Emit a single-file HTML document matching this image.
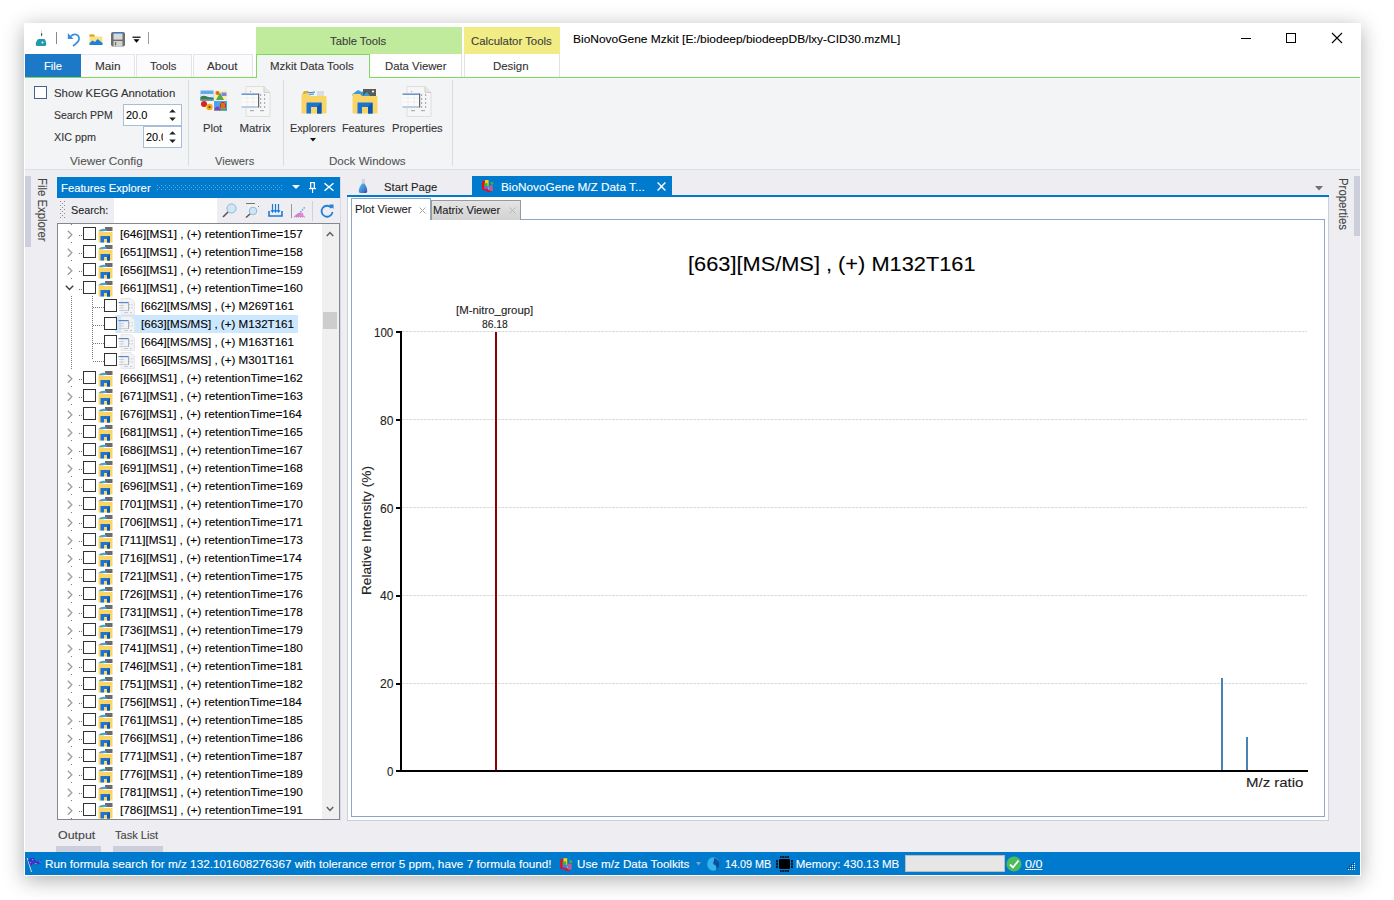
<!DOCTYPE html>
<html><head><meta charset="utf-8">
<style>
*{box-sizing:border-box;margin:0;padding:0}
html,body{width:1394px;height:900px;overflow:hidden;background:#fff;font-family:"Liberation Sans",sans-serif;font-size:12px;color:#1e1e1e}
.a{position:absolute}
svg.a{overflow:visible}
.t{position:absolute;white-space:nowrap;line-height:1;transform-origin:0 0;-webkit-text-stroke:0.1px currentColor}
</style></head><body>
<div class="a" style="left:24px;top:23px;width:1337px;height:853px;background:#fff;box-shadow:0 4px 20px rgba(0,0,0,0.32)"></div>
<div class="a" style="left:25px;top:23px;width:1335px;height:31px;background:#fff"></div>
<svg class="a" style="left:35px;top:29px;" width="12" height="18" viewBox="0 0 12 18"><line x1="6.5" y1="1" x2="6.5" y2="8" stroke="#d0d0d0" stroke-width="0.8"/><rect x="6" y="4.5" width="1.2" height="2" fill="#333"/><path d="M3.5 10 H9.5 Q11.5 12 11.3 15.5 Q11 17 9.5 17 H2.5 Q1 17 0.8 15.5 Q0.6 12 3.5 10Z" fill="#1f9bab"/><circle cx="7.5" cy="13.5" r="1" fill="#fff"/></svg>
<div class="a" style="left:56px;top:32px;width:1px;height:12px;background:#8a8a8a"></div>
<svg class="a" style="left:67px;top:32px;" width="14" height="15" viewBox="0 0 14 15"><path d="M3.5 4.5 Q6 2 9 2.5 Q12.5 3.5 12 7.5 Q11.5 10 6 14" fill="none" stroke="#3b8de0" stroke-width="1.7"/><path d="M0.8 1 L0.8 7 L6.5 7 Z" fill="#3b8de0"/></svg>
<svg class="a" style="left:89px;top:34px;" width="14" height="12" viewBox="0 0 14 12"><path d="M0.5 0.5 H5 L6 2.5 H13.5 V11 H0.5 Z" fill="#fbe08a"/><path d="M0.5 0.5 H5 L6 2.5 H0.5Z" fill="#dba21e"/><path d="M0.5 11 V9 L3.5 6.5 L6 8 L8.5 5 L13.5 9 V11Z" fill="#1f80d8"/></svg>
<svg class="a" style="left:110px;top:31px;" width="16" height="16" viewBox="0 0 16 16"><rect x="1" y="1" width="14" height="14.5" rx="2" fill="#6e6e6e"/><rect x="3.5" y="1" width="9" height="1.6" fill="#2e7fd0"/><rect x="3.5" y="2.6" width="9" height="6" fill="#d9d9d9"/><rect x="3.5" y="10" width="9" height="5.5" fill="#d2d2d2"/><rect x="5" y="11" width="1.2" height="3.5" fill="#6e6e6e"/></svg>
<svg class="a" style="left:132px;top:36px;" width="9" height="8" viewBox="0 0 9 8"><rect x="0.5" y="0.6" width="8" height="1.2" fill="#000"/><path d="M1.5 3.2 H7.5 L4.5 6.8 Z" fill="#000"/></svg>
<div class="a" style="left:148px;top:32px;width:1px;height:12px;background:#9a9a9a"></div>
<div class="a" style="left:256px;top:27px;width:206px;height:27px;background:#c0eb9c"></div>
<div class="a" style="left:464px;top:27px;width:96px;height:27px;background:#f1ec84"></div>
<div class="t" style="left:330.00px;top:36px;color:#3c3c3c;font-size:11.5px;transform:scaleX(0.9795);">Table Tools</div>
<div class="t" style="left:471.40px;top:36px;color:#3c3c3c;font-size:11.5px;transform:scaleX(0.9895);">Calculator Tools</div>
<div class="t" style="left:573.40px;top:34px;color:#000;font-size:11.5px;transform:scaleX(1.0405);">BioNovoGene Mzkit [E:/biodeep/biodeepDB/lxy-CID30.mzML]</div>
<div class="a" style="left:1241px;top:38px;width:10px;height:1px;background:#000"></div>
<div class="a" style="left:1286px;top:33px;width:10px;height:10px;border:1px solid #000"></div>
<svg class="a" style="left:1332px;top:33px;" width="10" height="10" viewBox="0 0 10 10"><path d="M0 0L10 10M10 0L0 10" stroke="#000" stroke-width="1.1"/></svg>
<div class="a" style="left:25px;top:54px;width:56px;height:23px;background:#1c79c8"></div>
<div class="t" style="left:44.40px;top:61px;color:#fff;font-size:11.5px;transform:scaleX(0.9705);">File</div>
<div class="a" style="left:81px;top:54px;width:54px;height:23px;background:#fbfbfd;border:1px solid #e4e5e6;border-bottom:none;border-left:none"></div>
<div class="a" style="left:136px;top:54px;width:56px;height:23px;background:#fbfbfd;border:1px solid #e4e5e6;border-bottom:none"></div>
<div class="a" style="left:193px;top:54px;width:60px;height:23px;background:#fbfbfd;border:1px solid #e4e5e6;border-bottom:none"></div>
<div class="t" style="left:95.40px;top:61px;color:#333;font-size:11.5px;transform:scaleX(1.0232);">Main</div>
<div class="t" style="left:149.90px;top:61px;color:#333;font-size:11.5px;transform:scaleX(0.9817);">Tools</div>
<div class="t" style="left:207.10px;top:61px;color:#333;font-size:11.5px;transform:scaleX(1.0176);">About</div>
<div class="a" style="left:25px;top:77px;width:1335px;height:1px;background:#7fd95a"></div>
<div class="a" style="left:256px;top:54px;width:114px;height:24px;background:#f3f4f6;border:1px solid #7fd95a;border-bottom:none"></div>
<div class="t" style="left:270.40px;top:61px;color:#333;font-size:11.5px;transform:scaleX(0.9952);">Mzkit Data Tools</div>
<div class="a" style="left:370px;top:54px;width:92px;height:23px;background:#fff;border-right:1px solid #e0e1e2"></div>
<div class="t" style="left:385.40px;top:61px;color:#333;font-size:11.5px;transform:scaleX(0.9840);">Data Viewer</div>
<div class="a" style="left:464px;top:54px;width:96px;height:23px;background:#fff;border-left:1px solid #e0e1e2;border-right:1px solid #e0e1e2"></div>
<div class="t" style="left:493.40px;top:61px;color:#333;font-size:11.5px;transform:scaleX(0.9943);">Design</div>
<div class="a" style="left:25px;top:78px;width:1335px;height:92px;background:#f3f4f6;border-bottom:1px solid #dddee0"></div>
<div class="a" style="left:34px;top:86px;width:13px;height:13px;background:#fff;border:1px solid #49618f"></div>
<div class="t" style="left:54.30px;top:88px;color:#333;font-size:11.5px;transform:scaleX(0.9879);">Show KEGG Annotation</div>
<div class="t" style="left:54.30px;top:110px;color:#333;font-size:11.5px;transform:scaleX(0.9098);">Search PPM</div>
<div class="t" style="left:54.30px;top:132px;color:#333;font-size:11.5px;transform:scaleX(0.9376);">XIC ppm</div>
<div class="a" style="left:123px;top:104px;width:59px;height:22px;background:#fff;border:1px solid #a9bcd8"></div>
<div class="t" style="left:126.00px;top:110px;color:#000;font-size:11.5px;transform:scaleX(0.9551);">20.0</div>
<div class="a" style="left:143px;top:126px;width:39px;height:22px;background:#fff;border:1px solid #a9bcd8"></div>
<div class="a" style="left:146px;top:126px;width:17px;height:20px;overflow:hidden">
<div class="t" style="left:0.20px;top:6px;color:#000;font-size:11.5px;transform:scaleX(0.9460);">20.0</div>
</div>
<svg class="a" style="left:169px;top:109px;" width="7" height="12" viewBox="0 0 7 12"><path d="M0.2 3.6 L3.5 0.2 L6.8 3.6 Z" fill="#222"/><path d="M0.2 8.5 L3.5 11.9 L6.8 8.5 Z" fill="#222"/></svg>
<svg class="a" style="left:169px;top:131px;" width="7" height="12" viewBox="0 0 7 12"><path d="M0.2 3.6 L3.5 0.2 L6.8 3.6 Z" fill="#222"/><path d="M0.2 8.5 L3.5 11.9 L6.8 8.5 Z" fill="#222"/></svg>
<div class="t" style="left:70.40px;top:156px;color:#555;font-size:11.5px;transform:scaleX(1.0185);">Viewer Config</div>
<div class="a" style="left:188px;top:80px;width:1px;height:86px;background:#dcdde0"></div>
<div class="a" style="left:283px;top:80px;width:1px;height:86px;background:#dcdde0"></div>
<div class="a" style="left:452px;top:80px;width:1px;height:86px;background:#dcdde0"></div>
<div class="t" style="left:215.00px;top:156px;color:#555;font-size:11.5px;transform:scaleX(0.9647);">Viewers</div>
<div class="t" style="left:328.50px;top:156px;color:#555;font-size:11.5px;transform:scaleX(1.0079);">Dock Windows</div>
<div class="t" style="left:203.00px;top:123px;color:#333;font-size:11.5px;transform:scaleX(0.9699);">Plot</div>
<div class="t" style="left:239.40px;top:123px;color:#333;font-size:11.5px;">Matrix</div>
<div class="t" style="left:290.30px;top:123px;color:#333;font-size:11.5px;transform:scaleX(0.9402);">Explorers</div>
<div class="t" style="left:342.40px;top:123px;color:#333;font-size:11.5px;transform:scaleX(0.9379);">Features</div>
<div class="t" style="left:391.50px;top:123px;color:#333;font-size:11.5px;transform:scaleX(0.9665);">Properties</div>
<svg class="a" style="left:310px;top:138px;" width="7" height="4" viewBox="0 0 7 4"><path d="M0 0 H6 L3 3.5 Z" fill="#111"/></svg>
<div class="a" style="left:25px;top:170px;width:1335px;height:682px;background:#eeeef2"></div>
<svg class="a" style="left:200px;top:90px;" width="28" height="21" viewBox="0 0 28 21">
<rect x="0.5" y="0.5" width="13" height="10" fill="#6aa7e8"/>
<rect x="0.5" y="4" width="13" height="3" fill="#dfeefa"/>
<path d="M0.5 7 Q4 4.5 9 7.5 L13.5 8 V10.5 H0.5Z" fill="#3d7d3b"/>
<rect x="0.5" y="9" width="13" height="1.5" fill="#5c8fc4"/>
<rect x="14" y="0.5" width="13" height="10" fill="#f3f0b0"/>
<path d="M16 10 L20 2.5 L24 10Z" fill="#5aa54a"/>
<circle cx="17.5" cy="3" r="2" fill="#e8641e"/>
<rect x="21.5" y="2.5" width="5" height="3.5" fill="#7a86e0"/>
<rect x="0.5" y="11" width="13" height="9.5" fill="#f7f3ea"/>
<circle cx="4" cy="14" r="3" fill="#d8231c"/>
<circle cx="9.5" cy="17" r="3.2" fill="#f2a81c"/>
<circle cx="9.5" cy="17" r="1" fill="#5a3a10"/>
<rect x="14" y="11" width="13" height="9.5" fill="#4aa3ee"/>
<path d="M14 20.5 Q16 15 19 17 Q21 19 20 20.5Z" fill="#8f3fa8"/>
<ellipse cx="23" cy="15.5" rx="3" ry="3.6" fill="#c8221e"/>
<path d="M22 13 V19 M24 13 V19" stroke="#f5d21a" stroke-width="0.9"/>
<rect x="19" y="19.5" width="8" height="1" fill="#2b9a3a"/>
</svg>
<svg class="a" style="left:241px;top:86px;" width="30" height="31" viewBox="0 0 30 31">
<path d="M5 0.5 H23 L29 6.5 V30.5 H5Z" fill="#f6f6f6" stroke="#dedede"/>
<path d="M23 0.5 V6.5 H29" fill="#e6e6e6" stroke="#cfcfcf"/>
<g fill="#a8aebb"><rect x="19" y="8" width="1.2" height="2"/><rect x="23" y="8" width="1.2" height="2"/><rect x="19" y="12" width="1.2" height="2"/><rect x="23" y="12" width="1.2" height="2"/><rect x="19" y="16" width="1.2" height="2"/><rect x="23" y="16" width="1.2" height="2"/><rect x="19" y="20" width="1.2" height="2"/><rect x="23" y="20" width="1.2" height="2"/><rect x="9" y="24" width="4" height="1.2"/><rect x="19" y="24" width="4" height="1.2"/><rect x="9" y="5" width="1.2" height="1.2"/></g>
<rect x="0.5" y="7.5" width="17" height="14" fill="#fbfbfb"/>
<rect x="0.5" y="7.5" width="17" height="1.3" fill="#4f7fc0"/>
<rect x="0.5" y="20.5" width="17" height="1" fill="#7f9fcf"/>
<rect x="17" y="7.5" width="1.2" height="14" fill="#666"/>
<g stroke="#e8e8e8" stroke-width="0.6"><line x1="1" y1="12" x2="17" y2="12"/><line x1="1" y1="16" x2="17" y2="16"/><line x1="6" y1="9" x2="6" y2="20"/><line x1="12" y1="9" x2="12" y2="20"/></g>
</svg>
<svg class="a" style="left:402px;top:86px;" width="30" height="31" viewBox="0 0 30 31">
<path d="M5 0.5 H23 L29 6.5 V30.5 H5Z" fill="#f6f6f6" stroke="#dedede"/>
<path d="M23 0.5 V6.5 H29" fill="#e6e6e6" stroke="#cfcfcf"/>
<g fill="#a8aebb"><rect x="19" y="8" width="1.2" height="2"/><rect x="23" y="8" width="1.2" height="2"/><rect x="19" y="12" width="1.2" height="2"/><rect x="23" y="12" width="1.2" height="2"/><rect x="19" y="16" width="1.2" height="2"/><rect x="23" y="16" width="1.2" height="2"/><rect x="19" y="20" width="1.2" height="2"/><rect x="23" y="20" width="1.2" height="2"/><rect x="9" y="24" width="4" height="1.2"/><rect x="19" y="24" width="4" height="1.2"/><rect x="9" y="5" width="1.2" height="1.2"/></g>
<rect x="0.5" y="7.5" width="17" height="14" fill="#fbfbfb"/>
<rect x="0.5" y="7.5" width="17" height="1.3" fill="#4f7fc0"/>
<rect x="0.5" y="20.5" width="17" height="1" fill="#7f9fcf"/>
<rect x="17" y="7.5" width="1.2" height="14" fill="#666"/>
<g stroke="#e8e8e8" stroke-width="0.6"><line x1="1" y1="12" x2="17" y2="12"/><line x1="1" y1="16" x2="17" y2="16"/><line x1="6" y1="9" x2="6" y2="20"/><line x1="12" y1="9" x2="12" y2="20"/></g>
</svg>
<svg class="a" style="left:301px;top:89px;" width="26" height="25" viewBox="0 0 26 25"><path d="M1 6 L3 2 H9 L10 3 Z" fill="#e0a92c"/><path d="M4 6 L9 1 L17 2 L15 7Z" fill="#f4f4f4"/><path d="M6 4 L14 3 M7 5.5 L13 5" stroke="#2a7fd0" stroke-width="1"/><rect x="16" y="2" width="7" height="5" fill="#d8dde3"/>
<path d="M0.5 6 Q0.5 5 1.5 5 H8 L10 7 H24.5 Q25.5 7 25.5 8 V23.5 Q25.5 24.5 24.5 24.5 H1.5 Q0.5 24.5 0.5 23.5Z" fill="#f9d466"/>
<path d="M5.5 24.5 V14 Q5.5 13.5 6 13.5 H20 Q20.5 13.5 20.5 14 V24.5 H16 V18 H10 V24.5Z" fill="#1b73d1"/>
<path d="M16 18 L20.5 13.5 V24.5 H16Z" fill="#0b58b0"/>
</svg>
<svg class="a" style="left:352px;top:89px;" width="26" height="25" viewBox="0 0 26 25"><path d="M0.5 5 L6 1 L10 3 L13 1 V7 H0.5Z" fill="#3a9bd8"/><rect x="11" y="0" width="13" height="7" fill="#5b5b5b"/><circle cx="21" cy="2.5" r="1.1" fill="#fff"/><path d="M11 7 L15 3 L18 7Z" fill="#3a9bd8"/>
<path d="M0.5 6 Q0.5 5 1.5 5 H8 L10 7 H24.5 Q25.5 7 25.5 8 V23.5 Q25.5 24.5 24.5 24.5 H1.5 Q0.5 24.5 0.5 23.5Z" fill="#f9d466"/>
<path d="M5.5 24.5 V14 Q5.5 13.5 6 13.5 H20 Q20.5 13.5 20.5 14 V24.5 H16 V18 H10 V24.5Z" fill="#1b73d1"/>
<path d="M16 18 L20.5 13.5 V24.5 H16Z" fill="#0b58b0"/>
</svg>
<div class="a" style="left:25px;top:176px;width:6px;height:71px;background:#cccedb"></div>
<div class="t" style="left:36px;top:178px;color:#444;font-size:12px;transform-origin:0 0;transform:translate(12px,0) rotate(90deg) scaleX(0.945)">File Explorer</div>
<div class="a" style="left:1354px;top:176px;width:6px;height:60px;background:#cccedb"></div>
<div class="t" style="left:1337px;top:178px;color:#444;font-size:12px;transform-origin:0 0;transform:translate(12px,0) rotate(90deg) scaleX(0.95)">Properties</div>
<div class="a" style="left:57px;top:177px;width:283px;height:21px;background:#007acc"></div>
<div class="t" style="left:61.30px;top:183px;color:#fff;font-size:11.5px;transform:scaleX(0.9807);">Features Explorer</div>
<svg class="a" style="left:157px;top:185px;" width="126" height="5" viewBox="0 0 126 5"><g fill="#6aaee0"><rect x="0" y="0" width="1" height="1"/><rect x="0" y="4" width="1" height="1"/><rect x="2" y="2" width="1" height="1"/><rect x="4" y="0" width="1" height="1"/><rect x="4" y="4" width="1" height="1"/><rect x="6" y="2" width="1" height="1"/><rect x="8" y="0" width="1" height="1"/><rect x="8" y="4" width="1" height="1"/><rect x="10" y="2" width="1" height="1"/><rect x="12" y="0" width="1" height="1"/><rect x="12" y="4" width="1" height="1"/><rect x="14" y="2" width="1" height="1"/><rect x="16" y="0" width="1" height="1"/><rect x="16" y="4" width="1" height="1"/><rect x="18" y="2" width="1" height="1"/><rect x="20" y="0" width="1" height="1"/><rect x="20" y="4" width="1" height="1"/><rect x="22" y="2" width="1" height="1"/><rect x="24" y="0" width="1" height="1"/><rect x="24" y="4" width="1" height="1"/><rect x="26" y="2" width="1" height="1"/><rect x="28" y="0" width="1" height="1"/><rect x="28" y="4" width="1" height="1"/><rect x="30" y="2" width="1" height="1"/><rect x="32" y="0" width="1" height="1"/><rect x="32" y="4" width="1" height="1"/><rect x="34" y="2" width="1" height="1"/><rect x="36" y="0" width="1" height="1"/><rect x="36" y="4" width="1" height="1"/><rect x="38" y="2" width="1" height="1"/><rect x="40" y="0" width="1" height="1"/><rect x="40" y="4" width="1" height="1"/><rect x="42" y="2" width="1" height="1"/><rect x="44" y="0" width="1" height="1"/><rect x="44" y="4" width="1" height="1"/><rect x="46" y="2" width="1" height="1"/><rect x="48" y="0" width="1" height="1"/><rect x="48" y="4" width="1" height="1"/><rect x="50" y="2" width="1" height="1"/><rect x="52" y="0" width="1" height="1"/><rect x="52" y="4" width="1" height="1"/><rect x="54" y="2" width="1" height="1"/><rect x="56" y="0" width="1" height="1"/><rect x="56" y="4" width="1" height="1"/><rect x="58" y="2" width="1" height="1"/><rect x="60" y="0" width="1" height="1"/><rect x="60" y="4" width="1" height="1"/><rect x="62" y="2" width="1" height="1"/><rect x="64" y="0" width="1" height="1"/><rect x="64" y="4" width="1" height="1"/><rect x="66" y="2" width="1" height="1"/><rect x="68" y="0" width="1" height="1"/><rect x="68" y="4" width="1" height="1"/><rect x="70" y="2" width="1" height="1"/><rect x="72" y="0" width="1" height="1"/><rect x="72" y="4" width="1" height="1"/><rect x="74" y="2" width="1" height="1"/><rect x="76" y="0" width="1" height="1"/><rect x="76" y="4" width="1" height="1"/><rect x="78" y="2" width="1" height="1"/><rect x="80" y="0" width="1" height="1"/><rect x="80" y="4" width="1" height="1"/><rect x="82" y="2" width="1" height="1"/><rect x="84" y="0" width="1" height="1"/><rect x="84" y="4" width="1" height="1"/><rect x="86" y="2" width="1" height="1"/><rect x="88" y="0" width="1" height="1"/><rect x="88" y="4" width="1" height="1"/><rect x="90" y="2" width="1" height="1"/><rect x="92" y="0" width="1" height="1"/><rect x="92" y="4" width="1" height="1"/><rect x="94" y="2" width="1" height="1"/><rect x="96" y="0" width="1" height="1"/><rect x="96" y="4" width="1" height="1"/><rect x="98" y="2" width="1" height="1"/><rect x="100" y="0" width="1" height="1"/><rect x="100" y="4" width="1" height="1"/><rect x="102" y="2" width="1" height="1"/><rect x="104" y="0" width="1" height="1"/><rect x="104" y="4" width="1" height="1"/><rect x="106" y="2" width="1" height="1"/><rect x="108" y="0" width="1" height="1"/><rect x="108" y="4" width="1" height="1"/><rect x="110" y="2" width="1" height="1"/><rect x="112" y="0" width="1" height="1"/><rect x="112" y="4" width="1" height="1"/><rect x="114" y="2" width="1" height="1"/><rect x="116" y="0" width="1" height="1"/><rect x="116" y="4" width="1" height="1"/><rect x="118" y="2" width="1" height="1"/><rect x="120" y="0" width="1" height="1"/><rect x="120" y="4" width="1" height="1"/><rect x="122" y="2" width="1" height="1"/><rect x="124" y="0" width="1" height="1"/><rect x="124" y="4" width="1" height="1"/></g></svg>
<svg class="a" style="left:292px;top:185px;" width="8" height="4" viewBox="0 0 8 4"><path d="M0 0 H8 L4 4Z" fill="#fff"/></svg>
<svg class="a" style="left:309px;top:182px;" width="7" height="11" viewBox="0 0 7 11"><path d="M1 0 H6 V6 H1Z" fill="#fff"/><rect x="2.3" y="1.2" width="2.4" height="4.6" fill="#007acc"/><rect x="0" y="6" width="7" height="1.2" fill="#fff"/><rect x="3" y="7" width="1.1" height="4" fill="#fff"/></svg>
<svg class="a" style="left:324px;top:183px;" width="10" height="8" viewBox="0 0 10 8"><path d="M0.5 0.2L9.5 7.8M9.5 0.2L0.5 7.8" stroke="#fff" stroke-width="1.5"/></svg>
<div class="a" style="left:57px;top:198px;width:283px;height:25px;background:#eeeef2"></div>
<svg class="a" style="left:60px;top:201px;" width="5" height="17" viewBox="0 0 5 17"><g fill="#8a8a92"><rect x="0" y="0" width="1" height="1"/><rect x="4" y="0" width="1" height="1"/><rect x="2" y="2" width="1" height="1"/><rect x="0" y="4" width="1" height="1"/><rect x="4" y="4" width="1" height="1"/><rect x="2" y="6" width="1" height="1"/><rect x="0" y="8" width="1" height="1"/><rect x="4" y="8" width="1" height="1"/><rect x="2" y="10" width="1" height="1"/><rect x="0" y="12" width="1" height="1"/><rect x="4" y="12" width="1" height="1"/><rect x="2" y="14" width="1" height="1"/><rect x="0" y="16" width="1" height="1"/><rect x="4" y="16" width="1" height="1"/></g></svg>
<div class="t" style="left:71.40px;top:205px;color:#1e1e1e;font-size:11.5px;transform:scaleX(0.9382);">Search:</div>
<div class="a" style="left:114px;top:198px;width:103px;height:25px;background:#fff"></div>
<svg class="a" style="left:222px;top:203px;" width="15" height="15" viewBox="0 0 15 15"><circle cx="9.5" cy="5.5" r="4.6" fill="#cfe6f7" stroke="#8fb7d8" stroke-width="1"/><line x1="6" y1="9" x2="1" y2="14" stroke="#555" stroke-width="1.6"/></svg>
<svg class="a" style="left:245px;top:203px;" width="14" height="15" viewBox="0 0 14 15"><rect x="1" y="0" width="9" height="1" fill="#777"/><rect x="10" y="3" width="4" height="1" fill="#777"/><rect x="3" y="2" width="10" height="11" fill="#f2f2f4"/><circle cx="8" cy="8" r="3.8" fill="#cfe6f7" stroke="#8fb7d8" stroke-width="1"/><line x1="5" y1="11" x2="1" y2="14.5" stroke="#555" stroke-width="1.5"/></svg>
<svg class="a" style="left:268px;top:203px;" width="15" height="15" viewBox="0 0 15 15"><path d="M1 8 V13 H14 V8" fill="none" stroke="#1a7bd4" stroke-width="1.6"/><path d="M4.5 1 V9 M7.5 1 V9 M10.5 1 V9" stroke="#1a7bd4" stroke-width="1.2"/><path d="M3 7 L4.5 9.5 L6 7 M6 7 L7.5 9.5 L9 7 M9 7 L10.5 9.5 L12 7" fill="none" stroke="#1a7bd4" stroke-width="1"/></svg>
<div class="a" style="left:291px;top:204px;width:1px;height:14px;background:#999"></div>
<svg class="a" style="left:293px;top:204px;" width="13" height="14" viewBox="0 0 13 14"><path d="M1 13 Q4 8 10 9 L11 13Z" fill="#f080d8"/><path d="M4 12 L12 3" stroke="#5aa0e0" stroke-width="1.4" stroke-dasharray="1.5 1"/><path d="M1 13 H12" stroke="#888" stroke-width="0.8" stroke-dasharray="1 1"/></svg>
<div class="a" style="left:312px;top:201px;width:1px;height:20px;background:#d2d2d8"></div>
<svg class="a" style="left:320px;top:204px;" width="14" height="14" viewBox="0 0 14 14"><path d="M11.5 4 A5.5 5.5 0 1 0 12.5 8" fill="none" stroke="#1f7fd6" stroke-width="1.8"/><path d="M9 0.5 L13.5 0.5 L13.5 5Z" fill="#1f7fd6"/></svg>
<div class="a" style="left:57px;top:223px;width:283px;height:597px;background:#fff;border:1px solid #828790"></div>
<div class="a" style="left:322px;top:224px;width:17px;height:595px;background:#f0f0f0"></div>
<svg class="a" style="left:326px;top:231px;" width="8" height="6" viewBox="0 0 8 6"><path d="M0.8 5 L4 1.5 L7.2 5" fill="none" stroke="#606060" stroke-width="1.5"/></svg>
<svg class="a" style="left:326px;top:806px;" width="8" height="6" viewBox="0 0 8 6"><path d="M0.8 1 L4 4.5 L7.2 1" fill="none" stroke="#606060" stroke-width="1.5"/></svg>
<div class="a" style="left:323px;top:312px;width:14px;height:17px;background:#cdcdcd"></div>
<div class="a" style="left:71px;top:224px;width:1px;height:595px;background-image:linear-gradient(#777 50%, transparent 50%);background-size:1px 2px"></div>
<div class="a" style="left:79px;top:235px;width:4px;height:1px;background-image:linear-gradient(90deg,#777 50%, transparent 50%);background-size:2px 1px"></div>
<div class="a" style="left:83px;top:227px;width:13px;height:13px;background:#fff;border:1px solid #333"></div>
<svg class="a" style="left:98px;top:227px;" width="15" height="16" viewBox="0 0 15 16">
<path d="M0.5 4 H5 L6 5 H14.5 V15.5 H0.5Z" fill="#fbd565"/>
<path d="M2.5 15.5 V9 H12 V15.5 H9 V12 H6 V15.5Z" fill="#1d74d2"/>
<path d="M9 12 L12 9 V15.5 H9Z" fill="#0d5cb5"/>
<rect x="7" y="0" width="7.5" height="4" fill="#6b6b6b"/>
<path d="M0.5 4 Q3 1 8 2 L9 4Z" fill="#45a2de"/>
</svg>
<div class="t" style="left:119.80px;top:229px;color:#000;font-size:11.5px;transform:scaleX(1.0238);">[646][MS1] , (+) retentionTime=157</div>
<div class="a" style="left:63px;top:226px;width:14px;height:16px;background:#fff"></div>
<svg class="a" style="left:67px;top:230px;" width="6" height="10" viewBox="0 0 6 10"><path d="M0.8 0.8 L4.8 4.8 L0.8 8.8" fill="none" stroke="#a0a0a0" stroke-width="1.4"/></svg>
<div class="a" style="left:79px;top:253px;width:4px;height:1px;background-image:linear-gradient(90deg,#777 50%, transparent 50%);background-size:2px 1px"></div>
<div class="a" style="left:83px;top:245px;width:13px;height:13px;background:#fff;border:1px solid #333"></div>
<svg class="a" style="left:98px;top:245px;" width="15" height="16" viewBox="0 0 15 16">
<path d="M0.5 4 H5 L6 5 H14.5 V15.5 H0.5Z" fill="#fbd565"/>
<path d="M2.5 15.5 V9 H12 V15.5 H9 V12 H6 V15.5Z" fill="#1d74d2"/>
<path d="M9 12 L12 9 V15.5 H9Z" fill="#0d5cb5"/>
<rect x="7" y="0" width="7.5" height="4" fill="#6b6b6b"/>
<path d="M0.5 4 Q3 1 8 2 L9 4Z" fill="#45a2de"/>
</svg>
<div class="t" style="left:119.80px;top:247px;color:#000;font-size:11.5px;transform:scaleX(1.0238);">[651][MS1] , (+) retentionTime=158</div>
<div class="a" style="left:63px;top:244px;width:14px;height:16px;background:#fff"></div>
<svg class="a" style="left:67px;top:248px;" width="6" height="10" viewBox="0 0 6 10"><path d="M0.8 0.8 L4.8 4.8 L0.8 8.8" fill="none" stroke="#a0a0a0" stroke-width="1.4"/></svg>
<div class="a" style="left:79px;top:271px;width:4px;height:1px;background-image:linear-gradient(90deg,#777 50%, transparent 50%);background-size:2px 1px"></div>
<div class="a" style="left:83px;top:263px;width:13px;height:13px;background:#fff;border:1px solid #333"></div>
<svg class="a" style="left:98px;top:263px;" width="15" height="16" viewBox="0 0 15 16">
<path d="M0.5 4 H5 L6 5 H14.5 V15.5 H0.5Z" fill="#fbd565"/>
<path d="M2.5 15.5 V9 H12 V15.5 H9 V12 H6 V15.5Z" fill="#1d74d2"/>
<path d="M9 12 L12 9 V15.5 H9Z" fill="#0d5cb5"/>
<rect x="7" y="0" width="7.5" height="4" fill="#6b6b6b"/>
<path d="M0.5 4 Q3 1 8 2 L9 4Z" fill="#45a2de"/>
</svg>
<div class="t" style="left:119.80px;top:265px;color:#000;font-size:11.5px;transform:scaleX(1.0238);">[656][MS1] , (+) retentionTime=159</div>
<div class="a" style="left:63px;top:262px;width:14px;height:16px;background:#fff"></div>
<svg class="a" style="left:67px;top:266px;" width="6" height="10" viewBox="0 0 6 10"><path d="M0.8 0.8 L4.8 4.8 L0.8 8.8" fill="none" stroke="#a0a0a0" stroke-width="1.4"/></svg>
<div class="a" style="left:79px;top:289px;width:4px;height:1px;background-image:linear-gradient(90deg,#777 50%, transparent 50%);background-size:2px 1px"></div>
<div class="a" style="left:83px;top:281px;width:13px;height:13px;background:#fff;border:1px solid #333"></div>
<svg class="a" style="left:98px;top:281px;" width="15" height="16" viewBox="0 0 15 16">
<path d="M0.5 4 H5 L6 5 H14.5 V15.5 H0.5Z" fill="#fbd565"/>
<path d="M2.5 15.5 V9 H12 V15.5 H9 V12 H6 V15.5Z" fill="#1d74d2"/>
<path d="M9 12 L12 9 V15.5 H9Z" fill="#0d5cb5"/>
<rect x="7" y="0" width="7.5" height="4" fill="#6b6b6b"/>
<path d="M0.5 4 Q3 1 8 2 L9 4Z" fill="#45a2de"/>
</svg>
<div class="t" style="left:119.80px;top:283px;color:#000;font-size:11.5px;transform:scaleX(1.0238);">[661][MS1] , (+) retentionTime=160</div>
<div class="a" style="left:63px;top:280px;width:14px;height:16px;background:#fff"></div>
<svg class="a" style="left:65px;top:285px;" width="9" height="6" viewBox="0 0 9 6"><path d="M0.8 0.8 L4.5 4.5 L8.2 0.8" fill="none" stroke="#404040" stroke-width="1.5"/></svg>
<div class="a" style="left:93px;top:307px;width:11px;height:1px;background-image:linear-gradient(90deg,#777 50%, transparent 50%);background-size:2px 1px"></div>
<div class="a" style="left:104px;top:299px;width:13px;height:13px;background:#fff;border:1px solid #333"></div>
<svg class="a" style="left:118px;top:298px;" width="17" height="17" viewBox="0 0 17 17">
<path d="M3 0.5 H13 L16.5 4 V16.5 H3Z" fill="#f3f3f5" stroke="#e2e2e6" stroke-width="0.8"/>
<rect x="0.5" y="4" width="10" height="1.2" fill="#5a86c8"/>
<g fill="#c4cad6"><rect x="1" y="7" width="5" height="0.9"/><rect x="1" y="9.5" width="5" height="0.9"/><rect x="1" y="12" width="9" height="0.9"/><rect x="11" y="6" width="1" height="1.5"/><rect x="13.5" y="6" width="1" height="1.5"/><rect x="11" y="9" width="1" height="1.5"/><rect x="13.5" y="9" width="1" height="1.5"/><rect x="6" y="14" width="4" height="1"/><rect x="12" y="14" width="2" height="1"/></g>
<rect x="10" y="4" width="0.8" height="9" fill="#9aa0aa"/>
</svg>
<div class="t" style="left:141.20px;top:301px;color:#000;font-size:11.5px;transform:scaleX(1.0079);">[662][MS/MS] , (+) M269T161</div>
<div class="a" style="left:115px;top:315px;width:183px;height:18px;background:#cce8ff"></div>
<div class="a" style="left:93px;top:325px;width:11px;height:1px;background-image:linear-gradient(90deg,#777 50%, transparent 50%);background-size:2px 1px"></div>
<div class="a" style="left:104px;top:317px;width:13px;height:13px;background:#fff;border:1px solid #333"></div>
<svg class="a" style="left:118px;top:316px;" width="17" height="17" viewBox="0 0 17 17">
<path d="M3 0.5 H13 L16.5 4 V16.5 H3Z" fill="#f3f3f5" stroke="#e2e2e6" stroke-width="0.8"/>
<rect x="0.5" y="4" width="10" height="1.2" fill="#5a86c8"/>
<g fill="#c4cad6"><rect x="1" y="7" width="5" height="0.9"/><rect x="1" y="9.5" width="5" height="0.9"/><rect x="1" y="12" width="9" height="0.9"/><rect x="11" y="6" width="1" height="1.5"/><rect x="13.5" y="6" width="1" height="1.5"/><rect x="11" y="9" width="1" height="1.5"/><rect x="13.5" y="9" width="1" height="1.5"/><rect x="6" y="14" width="4" height="1"/><rect x="12" y="14" width="2" height="1"/></g>
<rect x="10" y="4" width="0.8" height="9" fill="#9aa0aa"/>
</svg>
<div class="t" style="left:141.20px;top:319px;color:#000;font-size:11.5px;transform:scaleX(1.0079);">[663][MS/MS] , (+) M132T161</div>
<div class="a" style="left:93px;top:343px;width:11px;height:1px;background-image:linear-gradient(90deg,#777 50%, transparent 50%);background-size:2px 1px"></div>
<div class="a" style="left:104px;top:335px;width:13px;height:13px;background:#fff;border:1px solid #333"></div>
<svg class="a" style="left:118px;top:334px;" width="17" height="17" viewBox="0 0 17 17">
<path d="M3 0.5 H13 L16.5 4 V16.5 H3Z" fill="#f3f3f5" stroke="#e2e2e6" stroke-width="0.8"/>
<rect x="0.5" y="4" width="10" height="1.2" fill="#5a86c8"/>
<g fill="#c4cad6"><rect x="1" y="7" width="5" height="0.9"/><rect x="1" y="9.5" width="5" height="0.9"/><rect x="1" y="12" width="9" height="0.9"/><rect x="11" y="6" width="1" height="1.5"/><rect x="13.5" y="6" width="1" height="1.5"/><rect x="11" y="9" width="1" height="1.5"/><rect x="13.5" y="9" width="1" height="1.5"/><rect x="6" y="14" width="4" height="1"/><rect x="12" y="14" width="2" height="1"/></g>
<rect x="10" y="4" width="0.8" height="9" fill="#9aa0aa"/>
</svg>
<div class="t" style="left:141.20px;top:337px;color:#000;font-size:11.5px;transform:scaleX(1.0079);">[664][MS/MS] , (+) M163T161</div>
<div class="a" style="left:93px;top:361px;width:11px;height:1px;background-image:linear-gradient(90deg,#777 50%, transparent 50%);background-size:2px 1px"></div>
<div class="a" style="left:104px;top:353px;width:13px;height:13px;background:#fff;border:1px solid #333"></div>
<svg class="a" style="left:118px;top:352px;" width="17" height="17" viewBox="0 0 17 17">
<path d="M3 0.5 H13 L16.5 4 V16.5 H3Z" fill="#f3f3f5" stroke="#e2e2e6" stroke-width="0.8"/>
<rect x="0.5" y="4" width="10" height="1.2" fill="#5a86c8"/>
<g fill="#c4cad6"><rect x="1" y="7" width="5" height="0.9"/><rect x="1" y="9.5" width="5" height="0.9"/><rect x="1" y="12" width="9" height="0.9"/><rect x="11" y="6" width="1" height="1.5"/><rect x="13.5" y="6" width="1" height="1.5"/><rect x="11" y="9" width="1" height="1.5"/><rect x="13.5" y="9" width="1" height="1.5"/><rect x="6" y="14" width="4" height="1"/><rect x="12" y="14" width="2" height="1"/></g>
<rect x="10" y="4" width="0.8" height="9" fill="#9aa0aa"/>
</svg>
<div class="t" style="left:141.20px;top:355px;color:#000;font-size:11.5px;transform:scaleX(1.0079);">[665][MS/MS] , (+) M301T161</div>
<div class="a" style="left:79px;top:379px;width:4px;height:1px;background-image:linear-gradient(90deg,#777 50%, transparent 50%);background-size:2px 1px"></div>
<div class="a" style="left:83px;top:371px;width:13px;height:13px;background:#fff;border:1px solid #333"></div>
<svg class="a" style="left:98px;top:371px;" width="15" height="16" viewBox="0 0 15 16">
<path d="M0.5 4 H5 L6 5 H14.5 V15.5 H0.5Z" fill="#fbd565"/>
<path d="M2.5 15.5 V9 H12 V15.5 H9 V12 H6 V15.5Z" fill="#1d74d2"/>
<path d="M9 12 L12 9 V15.5 H9Z" fill="#0d5cb5"/>
<rect x="7" y="0" width="7.5" height="4" fill="#6b6b6b"/>
<path d="M0.5 4 Q3 1 8 2 L9 4Z" fill="#45a2de"/>
</svg>
<div class="t" style="left:119.80px;top:373px;color:#000;font-size:11.5px;transform:scaleX(1.0238);">[666][MS1] , (+) retentionTime=162</div>
<div class="a" style="left:63px;top:370px;width:14px;height:16px;background:#fff"></div>
<svg class="a" style="left:67px;top:374px;" width="6" height="10" viewBox="0 0 6 10"><path d="M0.8 0.8 L4.8 4.8 L0.8 8.8" fill="none" stroke="#a0a0a0" stroke-width="1.4"/></svg>
<div class="a" style="left:79px;top:397px;width:4px;height:1px;background-image:linear-gradient(90deg,#777 50%, transparent 50%);background-size:2px 1px"></div>
<div class="a" style="left:83px;top:389px;width:13px;height:13px;background:#fff;border:1px solid #333"></div>
<svg class="a" style="left:98px;top:389px;" width="15" height="16" viewBox="0 0 15 16">
<path d="M0.5 4 H5 L6 5 H14.5 V15.5 H0.5Z" fill="#fbd565"/>
<path d="M2.5 15.5 V9 H12 V15.5 H9 V12 H6 V15.5Z" fill="#1d74d2"/>
<path d="M9 12 L12 9 V15.5 H9Z" fill="#0d5cb5"/>
<rect x="7" y="0" width="7.5" height="4" fill="#6b6b6b"/>
<path d="M0.5 4 Q3 1 8 2 L9 4Z" fill="#45a2de"/>
</svg>
<div class="t" style="left:119.80px;top:391px;color:#000;font-size:11.5px;transform:scaleX(1.0238);">[671][MS1] , (+) retentionTime=163</div>
<div class="a" style="left:63px;top:388px;width:14px;height:16px;background:#fff"></div>
<svg class="a" style="left:67px;top:392px;" width="6" height="10" viewBox="0 0 6 10"><path d="M0.8 0.8 L4.8 4.8 L0.8 8.8" fill="none" stroke="#a0a0a0" stroke-width="1.4"/></svg>
<div class="a" style="left:79px;top:415px;width:4px;height:1px;background-image:linear-gradient(90deg,#777 50%, transparent 50%);background-size:2px 1px"></div>
<div class="a" style="left:83px;top:407px;width:13px;height:13px;background:#fff;border:1px solid #333"></div>
<svg class="a" style="left:98px;top:407px;" width="15" height="16" viewBox="0 0 15 16">
<path d="M0.5 4 H5 L6 5 H14.5 V15.5 H0.5Z" fill="#fbd565"/>
<path d="M2.5 15.5 V9 H12 V15.5 H9 V12 H6 V15.5Z" fill="#1d74d2"/>
<path d="M9 12 L12 9 V15.5 H9Z" fill="#0d5cb5"/>
<rect x="7" y="0" width="7.5" height="4" fill="#6b6b6b"/>
<path d="M0.5 4 Q3 1 8 2 L9 4Z" fill="#45a2de"/>
</svg>
<div class="t" style="left:119.80px;top:409px;color:#000;font-size:11.5px;transform:scaleX(1.0181);">[676][MS1] , (+) retentionTime=164</div>
<div class="a" style="left:63px;top:406px;width:14px;height:16px;background:#fff"></div>
<svg class="a" style="left:67px;top:410px;" width="6" height="10" viewBox="0 0 6 10"><path d="M0.8 0.8 L4.8 4.8 L0.8 8.8" fill="none" stroke="#a0a0a0" stroke-width="1.4"/></svg>
<div class="a" style="left:79px;top:433px;width:4px;height:1px;background-image:linear-gradient(90deg,#777 50%, transparent 50%);background-size:2px 1px"></div>
<div class="a" style="left:83px;top:425px;width:13px;height:13px;background:#fff;border:1px solid #333"></div>
<svg class="a" style="left:98px;top:425px;" width="15" height="16" viewBox="0 0 15 16">
<path d="M0.5 4 H5 L6 5 H14.5 V15.5 H0.5Z" fill="#fbd565"/>
<path d="M2.5 15.5 V9 H12 V15.5 H9 V12 H6 V15.5Z" fill="#1d74d2"/>
<path d="M9 12 L12 9 V15.5 H9Z" fill="#0d5cb5"/>
<rect x="7" y="0" width="7.5" height="4" fill="#6b6b6b"/>
<path d="M0.5 4 Q3 1 8 2 L9 4Z" fill="#45a2de"/>
</svg>
<div class="t" style="left:119.80px;top:427px;color:#000;font-size:11.5px;transform:scaleX(1.0238);">[681][MS1] , (+) retentionTime=165</div>
<div class="a" style="left:63px;top:424px;width:14px;height:16px;background:#fff"></div>
<svg class="a" style="left:67px;top:428px;" width="6" height="10" viewBox="0 0 6 10"><path d="M0.8 0.8 L4.8 4.8 L0.8 8.8" fill="none" stroke="#a0a0a0" stroke-width="1.4"/></svg>
<div class="a" style="left:79px;top:451px;width:4px;height:1px;background-image:linear-gradient(90deg,#777 50%, transparent 50%);background-size:2px 1px"></div>
<div class="a" style="left:83px;top:443px;width:13px;height:13px;background:#fff;border:1px solid #333"></div>
<svg class="a" style="left:98px;top:443px;" width="15" height="16" viewBox="0 0 15 16">
<path d="M0.5 4 H5 L6 5 H14.5 V15.5 H0.5Z" fill="#fbd565"/>
<path d="M2.5 15.5 V9 H12 V15.5 H9 V12 H6 V15.5Z" fill="#1d74d2"/>
<path d="M9 12 L12 9 V15.5 H9Z" fill="#0d5cb5"/>
<rect x="7" y="0" width="7.5" height="4" fill="#6b6b6b"/>
<path d="M0.5 4 Q3 1 8 2 L9 4Z" fill="#45a2de"/>
</svg>
<div class="t" style="left:119.80px;top:445px;color:#000;font-size:11.5px;transform:scaleX(1.0238);">[686][MS1] , (+) retentionTime=167</div>
<div class="a" style="left:63px;top:442px;width:14px;height:16px;background:#fff"></div>
<svg class="a" style="left:67px;top:446px;" width="6" height="10" viewBox="0 0 6 10"><path d="M0.8 0.8 L4.8 4.8 L0.8 8.8" fill="none" stroke="#a0a0a0" stroke-width="1.4"/></svg>
<div class="a" style="left:79px;top:469px;width:4px;height:1px;background-image:linear-gradient(90deg,#777 50%, transparent 50%);background-size:2px 1px"></div>
<div class="a" style="left:83px;top:461px;width:13px;height:13px;background:#fff;border:1px solid #333"></div>
<svg class="a" style="left:98px;top:461px;" width="15" height="16" viewBox="0 0 15 16">
<path d="M0.5 4 H5 L6 5 H14.5 V15.5 H0.5Z" fill="#fbd565"/>
<path d="M2.5 15.5 V9 H12 V15.5 H9 V12 H6 V15.5Z" fill="#1d74d2"/>
<path d="M9 12 L12 9 V15.5 H9Z" fill="#0d5cb5"/>
<rect x="7" y="0" width="7.5" height="4" fill="#6b6b6b"/>
<path d="M0.5 4 Q3 1 8 2 L9 4Z" fill="#45a2de"/>
</svg>
<div class="t" style="left:119.80px;top:463px;color:#000;font-size:11.5px;transform:scaleX(1.0238);">[691][MS1] , (+) retentionTime=168</div>
<div class="a" style="left:63px;top:460px;width:14px;height:16px;background:#fff"></div>
<svg class="a" style="left:67px;top:464px;" width="6" height="10" viewBox="0 0 6 10"><path d="M0.8 0.8 L4.8 4.8 L0.8 8.8" fill="none" stroke="#a0a0a0" stroke-width="1.4"/></svg>
<div class="a" style="left:79px;top:487px;width:4px;height:1px;background-image:linear-gradient(90deg,#777 50%, transparent 50%);background-size:2px 1px"></div>
<div class="a" style="left:83px;top:479px;width:13px;height:13px;background:#fff;border:1px solid #333"></div>
<svg class="a" style="left:98px;top:479px;" width="15" height="16" viewBox="0 0 15 16">
<path d="M0.5 4 H5 L6 5 H14.5 V15.5 H0.5Z" fill="#fbd565"/>
<path d="M2.5 15.5 V9 H12 V15.5 H9 V12 H6 V15.5Z" fill="#1d74d2"/>
<path d="M9 12 L12 9 V15.5 H9Z" fill="#0d5cb5"/>
<rect x="7" y="0" width="7.5" height="4" fill="#6b6b6b"/>
<path d="M0.5 4 Q3 1 8 2 L9 4Z" fill="#45a2de"/>
</svg>
<div class="t" style="left:119.80px;top:481px;color:#000;font-size:11.5px;transform:scaleX(1.0238);">[696][MS1] , (+) retentionTime=169</div>
<div class="a" style="left:63px;top:478px;width:14px;height:16px;background:#fff"></div>
<svg class="a" style="left:67px;top:482px;" width="6" height="10" viewBox="0 0 6 10"><path d="M0.8 0.8 L4.8 4.8 L0.8 8.8" fill="none" stroke="#a0a0a0" stroke-width="1.4"/></svg>
<div class="a" style="left:79px;top:505px;width:4px;height:1px;background-image:linear-gradient(90deg,#777 50%, transparent 50%);background-size:2px 1px"></div>
<div class="a" style="left:83px;top:497px;width:13px;height:13px;background:#fff;border:1px solid #333"></div>
<svg class="a" style="left:98px;top:497px;" width="15" height="16" viewBox="0 0 15 16">
<path d="M0.5 4 H5 L6 5 H14.5 V15.5 H0.5Z" fill="#fbd565"/>
<path d="M2.5 15.5 V9 H12 V15.5 H9 V12 H6 V15.5Z" fill="#1d74d2"/>
<path d="M9 12 L12 9 V15.5 H9Z" fill="#0d5cb5"/>
<rect x="7" y="0" width="7.5" height="4" fill="#6b6b6b"/>
<path d="M0.5 4 Q3 1 8 2 L9 4Z" fill="#45a2de"/>
</svg>
<div class="t" style="left:119.80px;top:499px;color:#000;font-size:11.5px;transform:scaleX(1.0238);">[701][MS1] , (+) retentionTime=170</div>
<div class="a" style="left:63px;top:496px;width:14px;height:16px;background:#fff"></div>
<svg class="a" style="left:67px;top:500px;" width="6" height="10" viewBox="0 0 6 10"><path d="M0.8 0.8 L4.8 4.8 L0.8 8.8" fill="none" stroke="#a0a0a0" stroke-width="1.4"/></svg>
<div class="a" style="left:79px;top:523px;width:4px;height:1px;background-image:linear-gradient(90deg,#777 50%, transparent 50%);background-size:2px 1px"></div>
<div class="a" style="left:83px;top:515px;width:13px;height:13px;background:#fff;border:1px solid #333"></div>
<svg class="a" style="left:98px;top:515px;" width="15" height="16" viewBox="0 0 15 16">
<path d="M0.5 4 H5 L6 5 H14.5 V15.5 H0.5Z" fill="#fbd565"/>
<path d="M2.5 15.5 V9 H12 V15.5 H9 V12 H6 V15.5Z" fill="#1d74d2"/>
<path d="M9 12 L12 9 V15.5 H9Z" fill="#0d5cb5"/>
<rect x="7" y="0" width="7.5" height="4" fill="#6b6b6b"/>
<path d="M0.5 4 Q3 1 8 2 L9 4Z" fill="#45a2de"/>
</svg>
<div class="t" style="left:119.80px;top:517px;color:#000;font-size:11.5px;transform:scaleX(1.0238);">[706][MS1] , (+) retentionTime=171</div>
<div class="a" style="left:63px;top:514px;width:14px;height:16px;background:#fff"></div>
<svg class="a" style="left:67px;top:518px;" width="6" height="10" viewBox="0 0 6 10"><path d="M0.8 0.8 L4.8 4.8 L0.8 8.8" fill="none" stroke="#a0a0a0" stroke-width="1.4"/></svg>
<div class="a" style="left:79px;top:541px;width:4px;height:1px;background-image:linear-gradient(90deg,#777 50%, transparent 50%);background-size:2px 1px"></div>
<div class="a" style="left:83px;top:533px;width:13px;height:13px;background:#fff;border:1px solid #333"></div>
<svg class="a" style="left:98px;top:533px;" width="15" height="16" viewBox="0 0 15 16">
<path d="M0.5 4 H5 L6 5 H14.5 V15.5 H0.5Z" fill="#fbd565"/>
<path d="M2.5 15.5 V9 H12 V15.5 H9 V12 H6 V15.5Z" fill="#1d74d2"/>
<path d="M9 12 L12 9 V15.5 H9Z" fill="#0d5cb5"/>
<rect x="7" y="0" width="7.5" height="4" fill="#6b6b6b"/>
<path d="M0.5 4 Q3 1 8 2 L9 4Z" fill="#45a2de"/>
</svg>
<div class="t" style="left:119.80px;top:535px;color:#000;font-size:11.5px;transform:scaleX(1.0287);">[711][MS1] , (+) retentionTime=173</div>
<div class="a" style="left:63px;top:532px;width:14px;height:16px;background:#fff"></div>
<svg class="a" style="left:67px;top:536px;" width="6" height="10" viewBox="0 0 6 10"><path d="M0.8 0.8 L4.8 4.8 L0.8 8.8" fill="none" stroke="#a0a0a0" stroke-width="1.4"/></svg>
<div class="a" style="left:79px;top:559px;width:4px;height:1px;background-image:linear-gradient(90deg,#777 50%, transparent 50%);background-size:2px 1px"></div>
<div class="a" style="left:83px;top:551px;width:13px;height:13px;background:#fff;border:1px solid #333"></div>
<svg class="a" style="left:98px;top:551px;" width="15" height="16" viewBox="0 0 15 16">
<path d="M0.5 4 H5 L6 5 H14.5 V15.5 H0.5Z" fill="#fbd565"/>
<path d="M2.5 15.5 V9 H12 V15.5 H9 V12 H6 V15.5Z" fill="#1d74d2"/>
<path d="M9 12 L12 9 V15.5 H9Z" fill="#0d5cb5"/>
<rect x="7" y="0" width="7.5" height="4" fill="#6b6b6b"/>
<path d="M0.5 4 Q3 1 8 2 L9 4Z" fill="#45a2de"/>
</svg>
<div class="t" style="left:119.80px;top:553px;color:#000;font-size:11.5px;transform:scaleX(1.0181);">[716][MS1] , (+) retentionTime=174</div>
<div class="a" style="left:63px;top:550px;width:14px;height:16px;background:#fff"></div>
<svg class="a" style="left:67px;top:554px;" width="6" height="10" viewBox="0 0 6 10"><path d="M0.8 0.8 L4.8 4.8 L0.8 8.8" fill="none" stroke="#a0a0a0" stroke-width="1.4"/></svg>
<div class="a" style="left:79px;top:577px;width:4px;height:1px;background-image:linear-gradient(90deg,#777 50%, transparent 50%);background-size:2px 1px"></div>
<div class="a" style="left:83px;top:569px;width:13px;height:13px;background:#fff;border:1px solid #333"></div>
<svg class="a" style="left:98px;top:569px;" width="15" height="16" viewBox="0 0 15 16">
<path d="M0.5 4 H5 L6 5 H14.5 V15.5 H0.5Z" fill="#fbd565"/>
<path d="M2.5 15.5 V9 H12 V15.5 H9 V12 H6 V15.5Z" fill="#1d74d2"/>
<path d="M9 12 L12 9 V15.5 H9Z" fill="#0d5cb5"/>
<rect x="7" y="0" width="7.5" height="4" fill="#6b6b6b"/>
<path d="M0.5 4 Q3 1 8 2 L9 4Z" fill="#45a2de"/>
</svg>
<div class="t" style="left:119.80px;top:571px;color:#000;font-size:11.5px;transform:scaleX(1.0238);">[721][MS1] , (+) retentionTime=175</div>
<div class="a" style="left:63px;top:568px;width:14px;height:16px;background:#fff"></div>
<svg class="a" style="left:67px;top:572px;" width="6" height="10" viewBox="0 0 6 10"><path d="M0.8 0.8 L4.8 4.8 L0.8 8.8" fill="none" stroke="#a0a0a0" stroke-width="1.4"/></svg>
<div class="a" style="left:79px;top:595px;width:4px;height:1px;background-image:linear-gradient(90deg,#777 50%, transparent 50%);background-size:2px 1px"></div>
<div class="a" style="left:83px;top:587px;width:13px;height:13px;background:#fff;border:1px solid #333"></div>
<svg class="a" style="left:98px;top:587px;" width="15" height="16" viewBox="0 0 15 16">
<path d="M0.5 4 H5 L6 5 H14.5 V15.5 H0.5Z" fill="#fbd565"/>
<path d="M2.5 15.5 V9 H12 V15.5 H9 V12 H6 V15.5Z" fill="#1d74d2"/>
<path d="M9 12 L12 9 V15.5 H9Z" fill="#0d5cb5"/>
<rect x="7" y="0" width="7.5" height="4" fill="#6b6b6b"/>
<path d="M0.5 4 Q3 1 8 2 L9 4Z" fill="#45a2de"/>
</svg>
<div class="t" style="left:119.80px;top:589px;color:#000;font-size:11.5px;transform:scaleX(1.0238);">[726][MS1] , (+) retentionTime=176</div>
<div class="a" style="left:63px;top:586px;width:14px;height:16px;background:#fff"></div>
<svg class="a" style="left:67px;top:590px;" width="6" height="10" viewBox="0 0 6 10"><path d="M0.8 0.8 L4.8 4.8 L0.8 8.8" fill="none" stroke="#a0a0a0" stroke-width="1.4"/></svg>
<div class="a" style="left:79px;top:613px;width:4px;height:1px;background-image:linear-gradient(90deg,#777 50%, transparent 50%);background-size:2px 1px"></div>
<div class="a" style="left:83px;top:605px;width:13px;height:13px;background:#fff;border:1px solid #333"></div>
<svg class="a" style="left:98px;top:605px;" width="15" height="16" viewBox="0 0 15 16">
<path d="M0.5 4 H5 L6 5 H14.5 V15.5 H0.5Z" fill="#fbd565"/>
<path d="M2.5 15.5 V9 H12 V15.5 H9 V12 H6 V15.5Z" fill="#1d74d2"/>
<path d="M9 12 L12 9 V15.5 H9Z" fill="#0d5cb5"/>
<rect x="7" y="0" width="7.5" height="4" fill="#6b6b6b"/>
<path d="M0.5 4 Q3 1 8 2 L9 4Z" fill="#45a2de"/>
</svg>
<div class="t" style="left:119.80px;top:607px;color:#000;font-size:11.5px;transform:scaleX(1.0238);">[731][MS1] , (+) retentionTime=178</div>
<div class="a" style="left:63px;top:604px;width:14px;height:16px;background:#fff"></div>
<svg class="a" style="left:67px;top:608px;" width="6" height="10" viewBox="0 0 6 10"><path d="M0.8 0.8 L4.8 4.8 L0.8 8.8" fill="none" stroke="#a0a0a0" stroke-width="1.4"/></svg>
<div class="a" style="left:79px;top:631px;width:4px;height:1px;background-image:linear-gradient(90deg,#777 50%, transparent 50%);background-size:2px 1px"></div>
<div class="a" style="left:83px;top:623px;width:13px;height:13px;background:#fff;border:1px solid #333"></div>
<svg class="a" style="left:98px;top:623px;" width="15" height="16" viewBox="0 0 15 16">
<path d="M0.5 4 H5 L6 5 H14.5 V15.5 H0.5Z" fill="#fbd565"/>
<path d="M2.5 15.5 V9 H12 V15.5 H9 V12 H6 V15.5Z" fill="#1d74d2"/>
<path d="M9 12 L12 9 V15.5 H9Z" fill="#0d5cb5"/>
<rect x="7" y="0" width="7.5" height="4" fill="#6b6b6b"/>
<path d="M0.5 4 Q3 1 8 2 L9 4Z" fill="#45a2de"/>
</svg>
<div class="t" style="left:119.80px;top:625px;color:#000;font-size:11.5px;transform:scaleX(1.0238);">[736][MS1] , (+) retentionTime=179</div>
<div class="a" style="left:63px;top:622px;width:14px;height:16px;background:#fff"></div>
<svg class="a" style="left:67px;top:626px;" width="6" height="10" viewBox="0 0 6 10"><path d="M0.8 0.8 L4.8 4.8 L0.8 8.8" fill="none" stroke="#a0a0a0" stroke-width="1.4"/></svg>
<div class="a" style="left:79px;top:649px;width:4px;height:1px;background-image:linear-gradient(90deg,#777 50%, transparent 50%);background-size:2px 1px"></div>
<div class="a" style="left:83px;top:641px;width:13px;height:13px;background:#fff;border:1px solid #333"></div>
<svg class="a" style="left:98px;top:641px;" width="15" height="16" viewBox="0 0 15 16">
<path d="M0.5 4 H5 L6 5 H14.5 V15.5 H0.5Z" fill="#fbd565"/>
<path d="M2.5 15.5 V9 H12 V15.5 H9 V12 H6 V15.5Z" fill="#1d74d2"/>
<path d="M9 12 L12 9 V15.5 H9Z" fill="#0d5cb5"/>
<rect x="7" y="0" width="7.5" height="4" fill="#6b6b6b"/>
<path d="M0.5 4 Q3 1 8 2 L9 4Z" fill="#45a2de"/>
</svg>
<div class="t" style="left:119.80px;top:643px;color:#000;font-size:11.5px;transform:scaleX(1.0238);">[741][MS1] , (+) retentionTime=180</div>
<div class="a" style="left:63px;top:640px;width:14px;height:16px;background:#fff"></div>
<svg class="a" style="left:67px;top:644px;" width="6" height="10" viewBox="0 0 6 10"><path d="M0.8 0.8 L4.8 4.8 L0.8 8.8" fill="none" stroke="#a0a0a0" stroke-width="1.4"/></svg>
<div class="a" style="left:79px;top:667px;width:4px;height:1px;background-image:linear-gradient(90deg,#777 50%, transparent 50%);background-size:2px 1px"></div>
<div class="a" style="left:83px;top:659px;width:13px;height:13px;background:#fff;border:1px solid #333"></div>
<svg class="a" style="left:98px;top:659px;" width="15" height="16" viewBox="0 0 15 16">
<path d="M0.5 4 H5 L6 5 H14.5 V15.5 H0.5Z" fill="#fbd565"/>
<path d="M2.5 15.5 V9 H12 V15.5 H9 V12 H6 V15.5Z" fill="#1d74d2"/>
<path d="M9 12 L12 9 V15.5 H9Z" fill="#0d5cb5"/>
<rect x="7" y="0" width="7.5" height="4" fill="#6b6b6b"/>
<path d="M0.5 4 Q3 1 8 2 L9 4Z" fill="#45a2de"/>
</svg>
<div class="t" style="left:119.80px;top:661px;color:#000;font-size:11.5px;transform:scaleX(1.0238);">[746][MS1] , (+) retentionTime=181</div>
<div class="a" style="left:63px;top:658px;width:14px;height:16px;background:#fff"></div>
<svg class="a" style="left:67px;top:662px;" width="6" height="10" viewBox="0 0 6 10"><path d="M0.8 0.8 L4.8 4.8 L0.8 8.8" fill="none" stroke="#a0a0a0" stroke-width="1.4"/></svg>
<div class="a" style="left:79px;top:685px;width:4px;height:1px;background-image:linear-gradient(90deg,#777 50%, transparent 50%);background-size:2px 1px"></div>
<div class="a" style="left:83px;top:677px;width:13px;height:13px;background:#fff;border:1px solid #333"></div>
<svg class="a" style="left:98px;top:677px;" width="15" height="16" viewBox="0 0 15 16">
<path d="M0.5 4 H5 L6 5 H14.5 V15.5 H0.5Z" fill="#fbd565"/>
<path d="M2.5 15.5 V9 H12 V15.5 H9 V12 H6 V15.5Z" fill="#1d74d2"/>
<path d="M9 12 L12 9 V15.5 H9Z" fill="#0d5cb5"/>
<rect x="7" y="0" width="7.5" height="4" fill="#6b6b6b"/>
<path d="M0.5 4 Q3 1 8 2 L9 4Z" fill="#45a2de"/>
</svg>
<div class="t" style="left:119.80px;top:679px;color:#000;font-size:11.5px;transform:scaleX(1.0238);">[751][MS1] , (+) retentionTime=182</div>
<div class="a" style="left:63px;top:676px;width:14px;height:16px;background:#fff"></div>
<svg class="a" style="left:67px;top:680px;" width="6" height="10" viewBox="0 0 6 10"><path d="M0.8 0.8 L4.8 4.8 L0.8 8.8" fill="none" stroke="#a0a0a0" stroke-width="1.4"/></svg>
<div class="a" style="left:79px;top:703px;width:4px;height:1px;background-image:linear-gradient(90deg,#777 50%, transparent 50%);background-size:2px 1px"></div>
<div class="a" style="left:83px;top:695px;width:13px;height:13px;background:#fff;border:1px solid #333"></div>
<svg class="a" style="left:98px;top:695px;" width="15" height="16" viewBox="0 0 15 16">
<path d="M0.5 4 H5 L6 5 H14.5 V15.5 H0.5Z" fill="#fbd565"/>
<path d="M2.5 15.5 V9 H12 V15.5 H9 V12 H6 V15.5Z" fill="#1d74d2"/>
<path d="M9 12 L12 9 V15.5 H9Z" fill="#0d5cb5"/>
<rect x="7" y="0" width="7.5" height="4" fill="#6b6b6b"/>
<path d="M0.5 4 Q3 1 8 2 L9 4Z" fill="#45a2de"/>
</svg>
<div class="t" style="left:119.80px;top:697px;color:#000;font-size:11.5px;transform:scaleX(1.0181);">[756][MS1] , (+) retentionTime=184</div>
<div class="a" style="left:63px;top:694px;width:14px;height:16px;background:#fff"></div>
<svg class="a" style="left:67px;top:698px;" width="6" height="10" viewBox="0 0 6 10"><path d="M0.8 0.8 L4.8 4.8 L0.8 8.8" fill="none" stroke="#a0a0a0" stroke-width="1.4"/></svg>
<div class="a" style="left:79px;top:721px;width:4px;height:1px;background-image:linear-gradient(90deg,#777 50%, transparent 50%);background-size:2px 1px"></div>
<div class="a" style="left:83px;top:713px;width:13px;height:13px;background:#fff;border:1px solid #333"></div>
<svg class="a" style="left:98px;top:713px;" width="15" height="16" viewBox="0 0 15 16">
<path d="M0.5 4 H5 L6 5 H14.5 V15.5 H0.5Z" fill="#fbd565"/>
<path d="M2.5 15.5 V9 H12 V15.5 H9 V12 H6 V15.5Z" fill="#1d74d2"/>
<path d="M9 12 L12 9 V15.5 H9Z" fill="#0d5cb5"/>
<rect x="7" y="0" width="7.5" height="4" fill="#6b6b6b"/>
<path d="M0.5 4 Q3 1 8 2 L9 4Z" fill="#45a2de"/>
</svg>
<div class="t" style="left:119.80px;top:715px;color:#000;font-size:11.5px;transform:scaleX(1.0238);">[761][MS1] , (+) retentionTime=185</div>
<div class="a" style="left:63px;top:712px;width:14px;height:16px;background:#fff"></div>
<svg class="a" style="left:67px;top:716px;" width="6" height="10" viewBox="0 0 6 10"><path d="M0.8 0.8 L4.8 4.8 L0.8 8.8" fill="none" stroke="#a0a0a0" stroke-width="1.4"/></svg>
<div class="a" style="left:79px;top:739px;width:4px;height:1px;background-image:linear-gradient(90deg,#777 50%, transparent 50%);background-size:2px 1px"></div>
<div class="a" style="left:83px;top:731px;width:13px;height:13px;background:#fff;border:1px solid #333"></div>
<svg class="a" style="left:98px;top:731px;" width="15" height="16" viewBox="0 0 15 16">
<path d="M0.5 4 H5 L6 5 H14.5 V15.5 H0.5Z" fill="#fbd565"/>
<path d="M2.5 15.5 V9 H12 V15.5 H9 V12 H6 V15.5Z" fill="#1d74d2"/>
<path d="M9 12 L12 9 V15.5 H9Z" fill="#0d5cb5"/>
<rect x="7" y="0" width="7.5" height="4" fill="#6b6b6b"/>
<path d="M0.5 4 Q3 1 8 2 L9 4Z" fill="#45a2de"/>
</svg>
<div class="t" style="left:119.80px;top:733px;color:#000;font-size:11.5px;transform:scaleX(1.0238);">[766][MS1] , (+) retentionTime=186</div>
<div class="a" style="left:63px;top:730px;width:14px;height:16px;background:#fff"></div>
<svg class="a" style="left:67px;top:734px;" width="6" height="10" viewBox="0 0 6 10"><path d="M0.8 0.8 L4.8 4.8 L0.8 8.8" fill="none" stroke="#a0a0a0" stroke-width="1.4"/></svg>
<div class="a" style="left:79px;top:757px;width:4px;height:1px;background-image:linear-gradient(90deg,#777 50%, transparent 50%);background-size:2px 1px"></div>
<div class="a" style="left:83px;top:749px;width:13px;height:13px;background:#fff;border:1px solid #333"></div>
<svg class="a" style="left:98px;top:749px;" width="15" height="16" viewBox="0 0 15 16">
<path d="M0.5 4 H5 L6 5 H14.5 V15.5 H0.5Z" fill="#fbd565"/>
<path d="M2.5 15.5 V9 H12 V15.5 H9 V12 H6 V15.5Z" fill="#1d74d2"/>
<path d="M9 12 L12 9 V15.5 H9Z" fill="#0d5cb5"/>
<rect x="7" y="0" width="7.5" height="4" fill="#6b6b6b"/>
<path d="M0.5 4 Q3 1 8 2 L9 4Z" fill="#45a2de"/>
</svg>
<div class="t" style="left:119.80px;top:751px;color:#000;font-size:11.5px;transform:scaleX(1.0238);">[771][MS1] , (+) retentionTime=187</div>
<div class="a" style="left:63px;top:748px;width:14px;height:16px;background:#fff"></div>
<svg class="a" style="left:67px;top:752px;" width="6" height="10" viewBox="0 0 6 10"><path d="M0.8 0.8 L4.8 4.8 L0.8 8.8" fill="none" stroke="#a0a0a0" stroke-width="1.4"/></svg>
<div class="a" style="left:79px;top:775px;width:4px;height:1px;background-image:linear-gradient(90deg,#777 50%, transparent 50%);background-size:2px 1px"></div>
<div class="a" style="left:83px;top:767px;width:13px;height:13px;background:#fff;border:1px solid #333"></div>
<svg class="a" style="left:98px;top:767px;" width="15" height="16" viewBox="0 0 15 16">
<path d="M0.5 4 H5 L6 5 H14.5 V15.5 H0.5Z" fill="#fbd565"/>
<path d="M2.5 15.5 V9 H12 V15.5 H9 V12 H6 V15.5Z" fill="#1d74d2"/>
<path d="M9 12 L12 9 V15.5 H9Z" fill="#0d5cb5"/>
<rect x="7" y="0" width="7.5" height="4" fill="#6b6b6b"/>
<path d="M0.5 4 Q3 1 8 2 L9 4Z" fill="#45a2de"/>
</svg>
<div class="t" style="left:119.80px;top:769px;color:#000;font-size:11.5px;transform:scaleX(1.0238);">[776][MS1] , (+) retentionTime=189</div>
<div class="a" style="left:63px;top:766px;width:14px;height:16px;background:#fff"></div>
<svg class="a" style="left:67px;top:770px;" width="6" height="10" viewBox="0 0 6 10"><path d="M0.8 0.8 L4.8 4.8 L0.8 8.8" fill="none" stroke="#a0a0a0" stroke-width="1.4"/></svg>
<div class="a" style="left:79px;top:793px;width:4px;height:1px;background-image:linear-gradient(90deg,#777 50%, transparent 50%);background-size:2px 1px"></div>
<div class="a" style="left:83px;top:785px;width:13px;height:13px;background:#fff;border:1px solid #333"></div>
<svg class="a" style="left:98px;top:785px;" width="15" height="16" viewBox="0 0 15 16">
<path d="M0.5 4 H5 L6 5 H14.5 V15.5 H0.5Z" fill="#fbd565"/>
<path d="M2.5 15.5 V9 H12 V15.5 H9 V12 H6 V15.5Z" fill="#1d74d2"/>
<path d="M9 12 L12 9 V15.5 H9Z" fill="#0d5cb5"/>
<rect x="7" y="0" width="7.5" height="4" fill="#6b6b6b"/>
<path d="M0.5 4 Q3 1 8 2 L9 4Z" fill="#45a2de"/>
</svg>
<div class="t" style="left:119.80px;top:787px;color:#000;font-size:11.5px;transform:scaleX(1.0238);">[781][MS1] , (+) retentionTime=190</div>
<div class="a" style="left:63px;top:784px;width:14px;height:16px;background:#fff"></div>
<svg class="a" style="left:67px;top:788px;" width="6" height="10" viewBox="0 0 6 10"><path d="M0.8 0.8 L4.8 4.8 L0.8 8.8" fill="none" stroke="#a0a0a0" stroke-width="1.4"/></svg>
<div class="a" style="left:79px;top:811px;width:4px;height:1px;background-image:linear-gradient(90deg,#777 50%, transparent 50%);background-size:2px 1px"></div>
<div class="a" style="left:83px;top:803px;width:13px;height:13px;background:#fff;border:1px solid #333"></div>
<svg class="a" style="left:98px;top:803px;" width="15" height="16" viewBox="0 0 15 16">
<path d="M0.5 4 H5 L6 5 H14.5 V15.5 H0.5Z" fill="#fbd565"/>
<path d="M2.5 15.5 V9 H12 V15.5 H9 V12 H6 V15.5Z" fill="#1d74d2"/>
<path d="M9 12 L12 9 V15.5 H9Z" fill="#0d5cb5"/>
<rect x="7" y="0" width="7.5" height="4" fill="#6b6b6b"/>
<path d="M0.5 4 Q3 1 8 2 L9 4Z" fill="#45a2de"/>
</svg>
<div class="t" style="left:119.80px;top:805px;color:#000;font-size:11.5px;transform:scaleX(1.0238);">[786][MS1] , (+) retentionTime=191</div>
<div class="a" style="left:63px;top:802px;width:14px;height:16px;background:#fff"></div>
<svg class="a" style="left:67px;top:806px;" width="6" height="10" viewBox="0 0 6 10"><path d="M0.8 0.8 L4.8 4.8 L0.8 8.8" fill="none" stroke="#a0a0a0" stroke-width="1.4"/></svg>
<div class="a" style="left:92px;top:296px;width:1px;height:63px;background-image:linear-gradient(#777 50%, transparent 50%);background-size:1px 2px"></div>
<div class="a" style="left:322px;top:224px;width:17px;height:595px;background:#f0f0f0"></div>
<svg class="a" style="left:326px;top:231px;" width="8" height="6" viewBox="0 0 8 6"><path d="M0.8 5 L4 1.5 L7.2 5" fill="none" stroke="#606060" stroke-width="1.5"/></svg>
<svg class="a" style="left:326px;top:806px;" width="8" height="6" viewBox="0 0 8 6"><path d="M0.8 1 L4 4.5 L7.2 1" fill="none" stroke="#606060" stroke-width="1.5"/></svg>
<div class="a" style="left:323px;top:312px;width:14px;height:17px;background:#cdcdcd"></div>
<div class="t" style="left:58.10px;top:830px;color:#444;font-size:11.5px;transform:scaleX(1.0785);">Output</div>
<div class="t" style="left:115.30px;top:830px;color:#444;font-size:11.5px;transform:scaleX(0.9640);">Task List</div>
<div class="a" style="left:56px;top:846px;width:45px;height:6px;background:#cccedb"></div>
<div class="a" style="left:113px;top:846px;width:50px;height:6px;background:#cccedb"></div>
<div class="a" style="left:340px;top:177px;width:1px;height:644px;background:#d8d9e0"></div>
<svg class="a" style="left:358px;top:178px;" width="10" height="16" viewBox="0 0 10 16"><defs><linearGradient id="fl" x1="0" y1="0" x2="1" y2="1"><stop offset="0" stop-color="#52c0ee"/><stop offset="0.6" stop-color="#3f86d4"/><stop offset="1" stop-color="#4a3aa8"/></linearGradient></defs><rect x="3.8" y="1" width="3" height="4.5" fill="#d4d4d8"/><path d="M4 5.5 H6.5 Q9.5 10 9.2 13.5 Q9 15 7.5 15 H2.5 Q1 15 0.8 13.5 Q0.6 10 4 5.5Z" fill="url(#fl)"/></svg>
<div class="t" style="left:384.20px;top:182px;color:#1e1e1e;font-size:11.5px;transform:scaleX(0.9788);">Start Page</div>
<div class="a" style="left:472px;top:176px;width:200px;height:21px;background:#007acc"></div>
<svg class="a" style="left:476px;top:176px;" width="20" height="20" viewBox="0 0 20 20"><path d="M6 5 H9 V12 H12 V13.5 H15 V16 H11 V14.5 H8 V14 H6Z" fill="#f00a14"/><rect x="9" y="4" width="3.6" height="6.5" fill="#fcd20e"/><rect x="8.2" y="7.2" width="3.3" height="3.5" fill="#2fb34a"/><rect x="8.2" y="10.3" width="3.8" height="2.7" fill="#5a6ef0"/><rect x="12" y="11" width="1.6" height="2.8" fill="#55b8ee"/><rect x="13.4" y="9.2" width="3.4" height="5.8" fill="#b0609c"/><path d="M14 6.5 L16.5 5.8 L18 8 L15.5 8.8Z" fill="#3cb04a"/></svg>
<div class="t" style="left:501.30px;top:182px;color:#fff;font-size:11.5px;transform:scaleX(1.0234);">BioNovoGene M/Z Data T...</div>
<svg class="a" style="left:657px;top:182px;" width="9" height="9" viewBox="0 0 9 9"><path d="M0.6 0.6L8.4 8.4M8.4 0.6L0.6 8.4" stroke="#fff" stroke-width="1.4"/></svg>
<svg class="a" style="left:1315px;top:186px;" width="8" height="5" viewBox="0 0 8 5"><path d="M0 0 H8 L4 4.5Z" fill="#717171"/></svg>
<div class="a" style="left:347px;top:195px;width:982px;height:2px;background:#007acc"></div>
<div class="a" style="left:347px;top:197px;width:982px;height:624px;background:#fff;border:1px solid #cccedb;border-top:none"></div>
<div class="a" style="left:351px;top:219px;width:974px;height:598px;background:#fff;border:1px solid #8aa6c8;border-top:none"></div>
<div class="a" style="left:431px;top:219px;width:894px;height:1px;background:#8aa6c8"></div>
<div class="a" style="left:431px;top:200px;width:90px;height:20px;background:linear-gradient(#e4e4e4,#d2d2d2);border:1px solid #9a9a9a;border-bottom:none"></div>
<div class="t" style="left:433.30px;top:205px;color:#1e1e1e;font-size:11.5px;transform:scaleX(0.9682);">Matrix Viewer</div>
<svg class="a" style="left:509px;top:207px;" width="7" height="7" viewBox="0 0 7 7"><path d="M0.5 0.5L6.5 6.5M6.5 0.5L0.5 6.5" stroke="#b5b5b5" stroke-width="1"/></svg>
<div class="a" style="left:351px;top:198px;width:80px;height:22px;background:#fff;border:1px solid #8aa6c8;border-bottom:none"></div>
<div class="t" style="left:355.00px;top:204px;color:#1e1e1e;font-size:11.5px;transform:scaleX(0.9755);">Plot Viewer</div>
<svg class="a" style="left:419px;top:207px;" width="7" height="7" viewBox="0 0 7 7"><path d="M0.5 0.5L6.5 6.5M6.5 0.5L0.5 6.5" stroke="#a8a8a8" stroke-width="1"/></svg>
<div class="t" style="left:688.26px;top:253px;color:#000;font-size:21px;transform:scaleX(1.0373);">[663][MS/MS] , (+) M132T161</div>
<div class="a" style="left:402px;top:331px;width:905px;height:1px;background-image:linear-gradient(90deg,#d9d9d9 72%, transparent 72%);background-size:3.7px 1px"></div>
<div class="a" style="left:402px;top:419px;width:905px;height:1px;background-image:linear-gradient(90deg,#d9d9d9 72%, transparent 72%);background-size:3.7px 1px"></div>
<div class="a" style="left:402px;top:507px;width:905px;height:1px;background-image:linear-gradient(90deg,#d9d9d9 72%, transparent 72%);background-size:3.7px 1px"></div>
<div class="a" style="left:402px;top:595px;width:905px;height:1px;background-image:linear-gradient(90deg,#d9d9d9 72%, transparent 72%);background-size:3.7px 1px"></div>
<div class="a" style="left:402px;top:683px;width:905px;height:1px;background-image:linear-gradient(90deg,#d9d9d9 72%, transparent 72%);background-size:3.7px 1px"></div>
<div class="a" style="left:400px;top:331px;width:2px;height:441px;background:#000"></div>
<div class="a" style="left:396px;top:770px;width:912px;height:2px;background:#000"></div>
<div class="a" style="left:396px;top:331px;width:5px;height:2px;background:#000"></div>
<div class="a" style="left:396px;top:419px;width:5px;height:2px;background:#000"></div>
<div class="a" style="left:396px;top:507px;width:5px;height:2px;background:#000"></div>
<div class="a" style="left:396px;top:595px;width:5px;height:2px;background:#000"></div>
<div class="a" style="left:396px;top:683px;width:5px;height:2px;background:#000"></div>
<div class="t" style="left:374.20px;top:326px;color:#222;font-size:13px;transform:scaleX(0.8854);">100</div>
<div class="t" style="left:380.00px;top:414px;color:#222;font-size:13px;transform:scaleX(0.9276);">80</div>
<div class="t" style="left:380.00px;top:502px;color:#222;font-size:13px;transform:scaleX(0.9276);">60</div>
<div class="t" style="left:380.00px;top:589px;color:#222;font-size:13px;transform:scaleX(0.9276);">40</div>
<div class="t" style="left:380.00px;top:677px;color:#222;font-size:13px;transform:scaleX(0.9276);">20</div>
<div class="t" style="left:387.00px;top:765px;color:#222;font-size:13px;transform:scaleX(0.8857);">0</div>
<div class="t" style="left:360px;top:595px;color:#222;font-size:13px;transform-origin:0 0;transform:rotate(-90deg) scaleX(1.05)">Relative Intensity (%)</div>
<div class="t" style="left:1245.85px;top:776px;color:#222;font-size:13px;transform:scaleX(1.1520);">M/z ratio</div>
<div class="a" style="left:495px;top:332px;width:2px;height:438px;background:#8b0000"></div>
<div class="a" style="left:1221px;top:678px;width:2px;height:92px;background:#4682b4"></div>
<div class="a" style="left:1246px;top:737px;width:2px;height:33px;background:#4682b4"></div>
<div class="t" style="left:455.80px;top:305px;color:#222;font-size:11px;transform:scaleX(1.0358);">[M-nitro_group]</div>
<div class="t" style="left:481.80px;top:319px;color:#222;font-size:11px;transform:scaleX(0.9376);">86.18</div>
<div class="a" style="left:25px;top:852px;width:1335px;height:23px;background:#007acc"></div>
<div class="t" style="left:45.20px;top:859px;color:#fff;font-size:11.5px;transform:scaleX(1.0226);">Run formula search for m/z 132.101608276367 with tolerance error 5 ppm, have 7 formula found!</div>
<svg class="a" style="left:24px;top:853px;" width="20" height="22" viewBox="0 0 20 22"><path d="M3.3 5 L7.5 19" stroke="#e8d8c8" stroke-width="1"/><path d="M4 7 Q7 4 10 5 L12 8 Q14.5 9 17.5 7 L16 10.5 Q14 12 12.5 11 L10.5 10 Q8 11 6.5 13.5Z" fill="#3a36c8"/><g fill="#8a9af0"><rect x="8" y="6" width="1.2" height="1.2"/><rect x="11" y="10" width="1.5" height="1"/><rect x="6" y="9" width="1" height="1"/><rect x="15.5" y="8" width="1" height="1.5"/></g></svg>
<svg class="a" style="left:554px;top:854px;transform:scale(1.05);transform-origin:0 0" width="20" height="20" viewBox="0 0 20 20"><path d="M6 5 H9 V12 H12 V13.5 H15 V16 H11 V14.5 H8 V14 H6Z" fill="#f00a14"/><rect x="9" y="4" width="3.6" height="6.5" fill="#fcd20e"/><rect x="8.2" y="7.2" width="3.3" height="3.5" fill="#2fb34a"/><rect x="8.2" y="10.3" width="3.8" height="2.7" fill="#5a6ef0"/><rect x="12" y="11" width="1.6" height="2.8" fill="#55b8ee"/><rect x="13.4" y="9.2" width="3.4" height="5.8" fill="#b0609c"/><path d="M14 6.5 L16.5 5.8 L18 8 L15.5 8.8Z" fill="#3cb04a"/></svg>
<div class="t" style="left:577.30px;top:859px;color:#fff;font-size:11.5px;transform:scaleX(1.0130);">Use m/z Data Toolkits</div>
<svg class="a" style="left:696px;top:862px;" width="5" height="4" viewBox="0 0 5 4"><path d="M0 0 H5 L2.5 3.5Z" fill="#7aa8d0"/></svg>
<svg class="a" style="left:707px;top:857px;" width="13" height="14" viewBox="0 0 13 14"><ellipse cx="6.2" cy="7" rx="6" ry="6.8" fill="#38b2ea"/><path d="M7 1 Q11.5 2 12.3 6.5 Q12.5 11 9 13 Q10 9 8 8 Q5.5 7 6.5 4.5 Q7.5 3 7 1Z" fill="#0d4f9e"/></svg>
<div class="t" style="left:724.70px;top:859px;color:#fff;font-size:11.5px;transform:scaleX(0.9404);">14.09 MB</div>
<svg class="a" style="left:776px;top:855px;" width="17" height="18" viewBox="0 0 17 18"><rect x="3" y="4" width="11" height="10" rx="1.2" fill="#000"/><g fill="#061a2e"><rect x="4" y="1" width="9" height="2" /><rect x="4" y="15" width="9" height="2"/><rect x="0" y="5" width="2" height="8"/><rect x="15" y="5" width="2" height="8"/></g><g fill="#0a5a9a"><rect x="5.5" y="1" width="0.8" height="2"/><rect x="8" y="1" width="0.8" height="2"/><rect x="10.5" y="1" width="0.8" height="2"/><rect x="5.5" y="15" width="0.8" height="2"/><rect x="8" y="15" width="0.8" height="2"/><rect x="10.5" y="15" width="0.8" height="2"/><rect x="0" y="7" width="2" height="0.8"/><rect x="0" y="10" width="2" height="0.8"/><rect x="15" y="7" width="2" height="0.8"/><rect x="15" y="10" width="2" height="0.8"/></g></svg>
<div class="t" style="left:795.70px;top:859px;color:#fff;font-size:11.5px;">Memory: 430.13 MB</div>
<div class="a" style="left:905px;top:855px;width:100px;height:17px;background:#e6e6e6;border:1px solid #bcbcbc"></div>
<svg class="a" style="left:1006px;top:856px;" width="16" height="16" viewBox="0 0 16 16"><circle cx="8" cy="8" r="7.5" fill="#4cbb5a"/><path d="M4 8.5 L7 11.5 L12.5 4.5" fill="none" stroke="#fff" stroke-width="1.8"/></svg>
<div class="t" style="left:1025.00px;top:859px;color:#fff;font-size:11.5px;transform:scaleX(1.0904);text-decoration:underline">0/0</div>
<svg class="a" style="left:1347px;top:862px;" width="9" height="9" viewBox="0 0 9 9"><g fill="#0a3a66"><rect x="6" y="0" width="1" height="1"/><rect x="4" y="2" width="1" height="1"/><rect x="6" y="2" width="1" height="1"/><rect x="2" y="4" width="1" height="1"/><rect x="4" y="4" width="1" height="1"/><rect x="6" y="4" width="1" height="1"/><rect x="0" y="6" width="1" height="1"/><rect x="2" y="6" width="1" height="1"/><rect x="4" y="6" width="1" height="1"/><rect x="6" y="6" width="1" height="1"/></g><g fill="#fff"><rect x="7" y="1" width="1" height="1"/><rect x="5" y="3" width="1" height="1"/><rect x="7" y="3" width="1" height="1"/><rect x="3" y="5" width="1" height="1"/><rect x="5" y="5" width="1" height="1"/><rect x="7" y="5" width="1" height="1"/><rect x="1" y="7" width="1" height="1"/><rect x="3" y="7" width="1" height="1"/><rect x="5" y="7" width="1" height="1"/><rect x="7" y="7" width="1" height="1"/></g></svg>
</body></html>
